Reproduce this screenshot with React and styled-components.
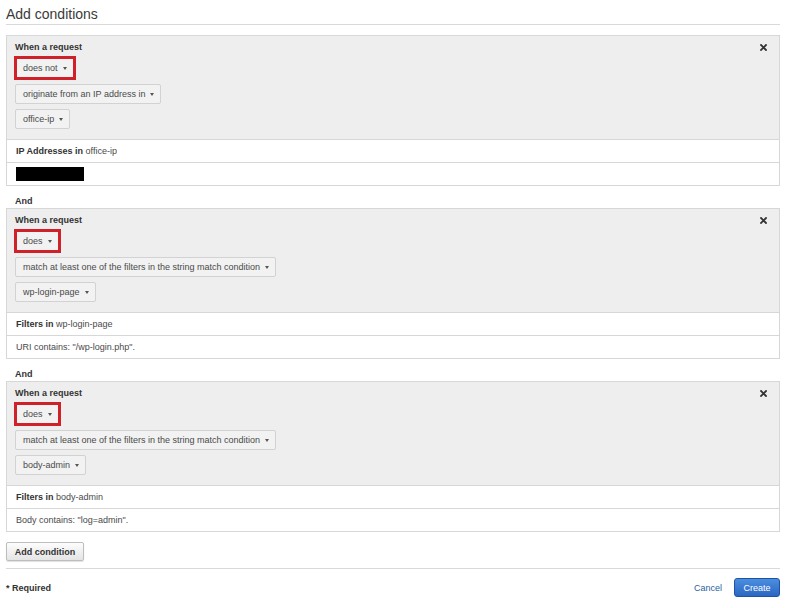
import React from "react";
import styled, { createGlobalStyle } from "styled-components";

const GlobalStyle = createGlobalStyle`
  body {
    margin: 0;
    background: #fff;
    font-family: "Liberation Sans", Arial, sans-serif;
    color: #444;
  }
`;

const Page = styled.div`
  width: 774px;
  padding: 0 0 0 6px;
  font-size: 9px;
`;

const Title = styled.h1`
  margin: 0;
  padding: 6px 0 2px;
  font-size: 14px;
  line-height: 16px;
  font-weight: normal;
  color: #3a3a3a;
  border-bottom: 1px solid #d9d9d9;
  height: 16px;
`;

const Conditions = styled.div`
  margin-top: 10px;
  display: flex;
  flex-direction: column;
`;

const Panel = styled.div`
  border: 1px solid #d7d7d7;
  background: #fff;
`;

const Header = styled.div`
  background: #eeeeee;
  display: flex;
  justify-content: space-between;
  padding: 5px 12px 10px 8px;
  border-bottom: 1px solid #d7d7d7;
`;

const Controls = styled.div`
  display: flex;
  flex-direction: column;
  align-items: flex-start;
`;

const Label = styled.div`
  font-weight: bold;
  line-height: 12px;
  color: #333;
  margin-bottom: 3px;
`;

const Select = styled.div`
  display: inline-flex;
  align-items: center;
  box-sizing: border-box;
  height: ${(p) => (p.$highlight ? "24px" : "20px")};
  margin-top: ${(p) => (p.$first ? "0" : p.$afterHighlight ? "4px" : "5px")};
  margin-left: ${(p) => (p.$highlight ? "-1px" : "0")};
  padding: 0 6px 0 ${(p) => (p.$highlight ? "6px" : "7px")};
  background: #f2f2f2;
  border: ${(p) => (p.$highlight ? "3px solid #d0212b" : "1px solid #d2d2d2")};
  border-radius: ${(p) => (p.$highlight ? "0" : "2px")};
  color: #4a4a4a;
  line-height: 12px;
  white-space: nowrap;

  &::after {
    content: "";
    margin-left: 5px;
    border-left: 2.5px solid transparent;
    border-right: 2.5px solid transparent;
    border-top: 3px solid #555;
  }
`;

const Close = styled.svg`
  width: 7px;
  height: 7px;
  margin-top: 3px;
  flex-shrink: 0;
`;

const Row = styled.div`
  height: 22px;
  line-height: 22px;
  padding: 0 9px;
  color: #4a4a4a;
  white-space: nowrap;

  & + & {
    border-top: 1px solid #d7d7d7;
  }

  b {
    color: #333;
  }
`;

const Redacted = styled.div`
  margin-top: 4px;
  width: 68px;
  height: 14px;
  background: #000;
`;

const And = styled.div`
  padding: 9px 9px 1px;
  font-weight: bold;
  line-height: 12px;
  color: #333;
`;

const AddButton = styled.button`
  margin-top: 10px;
  height: 19px;
  width: 78px;
  padding: 0;
  font-family: inherit;
  font-size: 9px;
  font-weight: bold;
  color: #333;
  background: linear-gradient(#fdfdfd, #e4e4e4);
  border: 1px solid #bdbdbd;
  border-radius: 2px;
  box-shadow: 0 1px 1px rgba(0, 0, 0, 0.12);
`;

const Divider = styled.hr`
  margin: 7px 0 0;
  border: 0;
  border-top: 1px solid #d9d9d9;
`;

const Footer = styled.div`
  display: flex;
  align-items: center;
  justify-content: space-between;
  padding-top: 9px;
  height: 19px;
  line-height: 12px;
`;

const Required = styled.span`
  color: #333;
  font-weight: bold;
  font-size: 9px;
`;

const Actions = styled.div`
  display: flex;
  align-items: center;
  gap: 12px;
`;

const Cancel = styled.a`
  color: #2b5f9e;
  font-size: 9px;
  text-decoration: none;
`;

const Create = styled.button`
  height: 19px;
  width: 46px;
  padding: 0;
  font-family: inherit;
  font-size: 9px;
  color: #fff;
  background: linear-gradient(#4b8ee0, #2a67c2);
  border: 1px solid #1f53a0;
  border-radius: 3px;
`;

const CloseIcon = () => (
  <Close viewBox="0 0 7 7">
    <path
      d="M1 1 L6 6 M6 1 L1 6"
      stroke="#333"
      strokeWidth="1.8"
      strokeLinecap="square"
    />
  </Close>
);

const conditions = [
  {
    match: "does not",
    type: "originate from an IP address in",
    set: "office-ip",
    rows: [
      <>
        <b>IP Addresses in</b> office-ip
      </>,
      <Redacted />,
    ],
  },
  {
    match: "does",
    type: "match at least one of the filters in the string match condition",
    set: "wp-login-page",
    rows: [
      <>
        <b>Filters in</b> wp-login-page
      </>,
      <>URI contains: "/wp-login.php".</>,
    ],
  },
  {
    match: "does",
    type: "match at least one of the filters in the string match condition",
    set: "body-admin",
    rows: [
      <>
        <b>Filters in</b> body-admin
      </>,
      <>Body contains: "log=admin".</>,
    ],
  },
];

export default function App() {
  return (
    <>
      <GlobalStyle />
      <Page>
        <Title>Add conditions</Title>
        <Conditions>
          {conditions.map((c, i) => (
            <React.Fragment key={i}>
              {i > 0 && <And>And</And>}
              <Panel>
                <Header>
                  <Controls>
                    <Label>When a request</Label>
                    <Select $first $highlight>
                      {c.match}
                    </Select>
                    <Select $afterHighlight>{c.type}</Select>
                    <Select>{c.set}</Select>
                  </Controls>
                  <CloseIcon />
                </Header>
                {c.rows.map((r, j) => (
                  <Row key={j}>{r}</Row>
                ))}
              </Panel>
            </React.Fragment>
          ))}
        </Conditions>
        <AddButton>Add condition</AddButton>
        <Divider />
        <Footer>
          <Required>* Required</Required>
          <Actions>
            <Cancel href="#">Cancel</Cancel>
            <Create>Create</Create>
          </Actions>
        </Footer>
      </Page>
    </>
  );
}
